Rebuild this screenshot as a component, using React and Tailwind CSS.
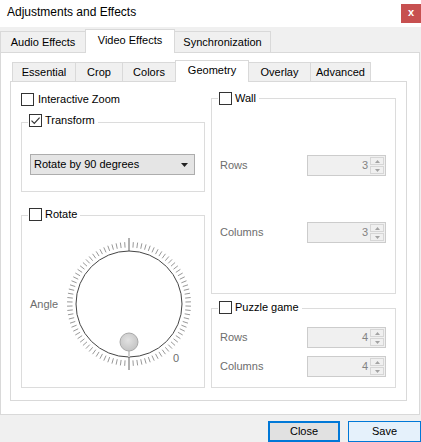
import React from "react";

function Box({ checked }) {
  return (
    <span className="w-[13px] h-[13px] border border-[#333333] bg-white flex items-center justify-center shrink-0">
      {checked && (
        <svg width="11" height="11" viewBox="0 0 11 11">
          <path d="M1.5 5.6 L4.3 8.4 L9.6 2.6" fill="none" stroke="#333333" strokeWidth="1.2" />
        </svg>
      )}
    </span>
  );
}

function Group({ title, checked, top, className, children }) {
  return (
    <div className={"relative border border-[#dcdcdc] " + className}>
      <div className={"absolute left-[6px] bg-white pl-[1px] pr-[3px] flex items-center gap-[3px] h-[13px] leading-[13px] " + top}>
        <Box checked={checked} />
        <span>{title}</span>
      </div>
      {children}
    </div>
  );
}

function Spin({ value }) {
  return (
    <div className="w-[79px] h-[21px] border border-[#cccccc] bg-[#f0f0f0] flex">
      <div className="flex-1 flex items-center justify-end pr-[2px] text-[#838383]">{value}</div>
      <div className="w-[15px] flex flex-col py-[1px] pr-[1px] gap-[1px]">
        <div className="flex-1 border border-[#d6d6d6] flex items-center justify-center">
          <svg width="5" height="3" viewBox="0 0 5 3"><path d="M0 3 L2.5 0 L5 3 Z" fill="#a3a3a3" /></svg>
        </div>
        <div className="flex-1 border border-[#d6d6d6] flex items-center justify-center">
          <svg width="5" height="3" viewBox="0 0 5 3"><path d="M0 0 L2.5 3 L5 0 Z" fill="#a3a3a3" /></svg>
        </div>
      </div>
    </div>
  );
}

function SpinRow({ label, value, className = "" }) {
  return (
    <div className={"flex items-center justify-between h-[21px] " + className}>
      <span className="text-[#6d6d6d]">{label}</span>
      <Spin value={value} />
    </div>
  );
}

function Dial() {
  const cx = 70, cy = 70;
  const ticks = [];
  for (let i = 0; i < 90; i++) {
    const a = (i * 4 * Math.PI) / 180;
    const long = i % 45 === 0;
    const r1 = long ? 53 : 56.5;
    const r2 = long ? 66 : 62;
    const s = Math.sin(a), c = Math.cos(a);
    ticks.push(
      <line
        key={i}
        x1={cx + r1 * s}
        y1={cy - r1 * c}
        x2={cx + r2 * s}
        y2={cy - r2 * c}
        stroke={long ? "#505050" : "#8c8c8c"}
        strokeWidth="0.9"
      />
    );
  }
  return (
    <svg width="140" height="140" viewBox="0 0 140 140">
      <defs>
        <radialGradient id="knob" cx="45%" cy="40%" r="60%">
          <stop offset="0%" stopColor="#e2e2e2" />
          <stop offset="100%" stopColor="#c4c4c4" />
        </radialGradient>
      </defs>
      {ticks}
      <circle cx={cx} cy={cy} r="53" fill="white" stroke="#454545" strokeWidth="1" />
      <line x1="70" y1="117" x2="70" y2="123" stroke="#d0d0d0" strokeWidth="2" />
      <circle cx="70" cy="108" r="9" fill="url(#knob)" stroke="#a9a9a9" strokeWidth="1" />
      <text x="117" y="128" fontSize="11" fill="#6d6d6d" textAnchor="middle" fontFamily="Liberation Sans, Arial, sans-serif">0</text>
    </svg>
  );
}

export default function App() {
  return (
    <div className="w-[421px] h-[442px] bg-[#f0f0f0] flex flex-col font-['Liberation_Sans',Arial,sans-serif] text-[11px] text-black overflow-hidden">
      {/* Title bar */}
      <div className="h-[27px] bg-white flex items-start shrink-0">
        <div className="pl-[7px] pt-[4px] text-[12px] leading-[16px]">Adjustments and Effects</div>
        <div className="ml-auto mt-[4px] w-[20px] h-[19px] bg-[#c75050] flex items-center justify-center text-white text-[11px] font-bold leading-none pb-[2px]">x</div>
      </div>

      {/* Outer tabs */}
      <div className="mt-[2px] h-[23px] flex items-end shrink-0 relative z-10">
        <div className="w-[86px] h-[21px] border border-b-0 border-[#d9d9d9] bg-[#f0f0f0] flex items-center justify-center">Audio Effects</div>
        <div className="relative z-10 -ml-[1px] -mr-[1px] w-[90px] h-[24px] mb-[-1px] border border-b-0 border-[#d9d9d9] bg-white flex items-center justify-center pb-[2px]">Video Effects</div>
        <div className="w-[97px] h-[21px] border border-b-0 border-[#d9d9d9] bg-[#f0f0f0] flex items-center justify-center">Synchronization</div>
      </div>

      {/* Outer pane */}
      <div className="w-[420px] h-[363px] border border-[#d9d9d9] bg-white shrink-0 pt-[7px] pl-[9px] flex flex-col">
        {/* Inner tabs */}
        <div className="h-[21px] flex items-end pl-[2px] relative z-10">
          <div className="w-[64px] h-[19px] border border-b-0 border-[#d9d9d9] bg-[#f0f0f0] flex items-center justify-center">Essential</div>
          <div className="-ml-[1px] w-[48px] h-[19px] border border-b-0 border-[#d9d9d9] bg-[#f0f0f0] flex items-center justify-center">Crop</div>
          <div className="-ml-[1px] w-[54px] h-[19px] border border-b-0 border-[#d9d9d9] bg-[#f0f0f0] flex items-center justify-center">Colors</div>
          <div className="relative z-10 -ml-[1px] w-[74px] h-[22px] mb-[-1px] border border-b-0 border-[#d9d9d9] bg-white flex items-center justify-center pb-[2px]">Geometry</div>
          <div className="-ml-[1px] w-[63px] h-[19px] border border-b-0 border-[#d9d9d9] bg-[#f0f0f0] flex items-center justify-center">Overlay</div>
          <div className="-ml-[1px] w-[61px] h-[19px] border border-b-0 border-[#d9d9d9] bg-[#f0f0f0] flex items-center justify-center">Advanced</div>
        </div>

        {/* Inner pane */}
        <div className="w-[397px] h-[320px] border border-[#d9d9d9] bg-white flex pl-[10px]">
          {/* Left column */}
          <div className="w-[184px] flex flex-col pt-[11px]">
            <div className="flex items-center gap-[4px] h-[13px] leading-[13px]">
              <Box />
              <span>Interactive Zoom</span>
            </div>
            <Group title="Transform" checked top="top-[-9px]" className="mt-[16px] h-[70px]">
              <div className="pt-[31px] px-[8px]">
                <div className="w-[165px] h-[21px] border border-[#adadad] bg-[#e5e5e5] flex items-center pl-[3px] pr-[6px]">
                  <span className="flex-1">Rotate by 90 degrees</span>
                  <svg width="7" height="4" viewBox="0 0 7 4"><path d="M0 0 L7 0 L3.5 4 Z" fill="#222222" /></svg>
                </div>
              </div>
            </Group>
            <Group title="Rotate" top="top-[-8px]" className="mt-[23px] h-[173px]">
              <div className="flex items-center pl-[8px] pt-[18px]">
                <span className="w-[29px] text-[#6d6d6d]">Angle</span>
                <Dial />
              </div>
            </Group>
          </div>

          {/* Right column */}
          <div className="ml-[6px] w-[185px] flex flex-col pt-[16px]">
            <Group title="Wall" top="top-[-7px]" className="h-[196px]">
              <div className="pl-[8px] pr-[9px] pt-[56px] flex flex-col">
                <SpinRow label="Rows" value="3" />
                <SpinRow label="Columns" value="3" className="mt-[46px]" />
              </div>
            </Group>
            <Group title="Puzzle game" top="top-[-8px]" className="mt-[14px] h-[80px]">
              <div className="pl-[8px] pr-[9px] pt-[18px] flex flex-col">
                <SpinRow label="Rows" value="4" />
                <SpinRow label="Columns" value="4" className="mt-[8px]" />
              </div>
            </Group>
          </div>
        </div>
      </div>

      {/* Buttons */}
      <div className="mt-[6px] flex justify-end gap-[8px] shrink-0">
        <div className="w-[72px] h-[21px] border-2 border-[#0078d7] bg-[#e1e1e1] flex items-center justify-center">Close</div>
        <div className="w-[73px] h-[21px] border border-[#0078d7] bg-[#e5f1fb] flex items-center justify-center">Save</div>
      </div>
    </div>
  );
}
